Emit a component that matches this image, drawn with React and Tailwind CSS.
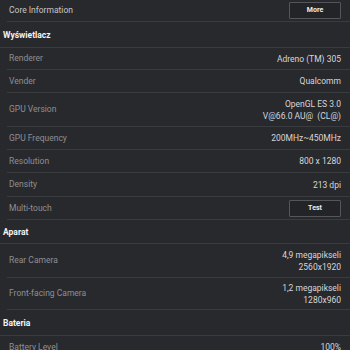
import React from "react";

const sections = [
  {
    title: "Wyświetlacz",
    h: "h-[26px]",
    rows: [
      { label: "Renderer", value: ["Adreno (TM) 305"], h: "h-[22px]" },
      { label: "Vender", value: ["Qualcomm"], h: "h-[23px]" },
      { label: "GPU Version", value: ["OpenGL ES 3.0", "V@66.0 AU@  (CL@)"], h: "h-[34px]" },
      { label: "GPU Frequency", value: ["200MHz~450MHz"], h: "h-[23px]" },
      { label: "Resolution", value: ["800 x 1280"], h: "h-[23px]" },
      { label: "Density", value: ["213 dpi"], h: "h-[24px]" },
      { label: "Multi-touch", button: "Test", h: "h-[23px]" },
    ],
  },
  {
    title: "Aparat",
    h: "h-[24px]",
    rows: [
      { label: "Rear Camera", value: ["4,9 megapikseli", "2560x1920"], h: "h-[34px]" },
      { label: "Front-facing Camera", value: ["1,2 megapikseli", "1280x960"], h: "h-[32px]" },
    ],
  },
  {
    title: "Bateria",
    h: "h-[26px]",
    rows: [{ label: "Battery Level", value: ["100%"], h: "h-[23px]" }],
  },
];

function SmallButton({ children }) {
  return (
    <button className="w-[52px] h-[17px] border border-[#55565a] bg-[#232428] text-[7px] font-bold text-[#eeeeee] rounded-[1px]">
      {children}
    </button>
  );
}

function Row({ row }) {
  return (
    <div className={`ml-[7px] pl-[2px] pr-[9px] flex items-center justify-between border-b border-[#3a3b3f] ${row.h}`}>
      <span className="text-[8.5px] text-[#8e8f92]">{row.label}</span>
      {row.button ? (
        <SmallButton>{row.button}</SmallButton>
      ) : (
        <div className="text-right text-[8.5px] leading-[12px] text-[#d6d6d8]">
          {row.value.map((v) => (
            <div key={v} className="whitespace-pre">{v}</div>
          ))}
        </div>
      )}
    </div>
  );
}

export default function App() {
  return (
    <div className="w-[350px] h-[350px] overflow-hidden bg-[#28292d]" style={{ fontFamily: "Roboto, sans-serif" }}>
      <div className="ml-[7px] pl-[2px] pr-[9px] h-[22px] flex items-center justify-between border-b border-[#3a3b3f]">
        <span className="text-[8.5px] text-[#c4c5c8]">Core Information</span>
        <SmallButton>More</SmallButton>
      </div>
      {sections.map((s) => (
        <div key={s.title}>
          <div className={`${s.h} pl-[3px] pt-[2px] flex items-center border-b border-[#3a3b3f]`}>
            <span className="text-[8.5px] font-bold text-[#f4f4f4]">{s.title}</span>
          </div>
          {s.rows.map((r) => (
            <Row key={r.label} row={r} />
          ))}
        </div>
      ))}
    </div>
  );
}
